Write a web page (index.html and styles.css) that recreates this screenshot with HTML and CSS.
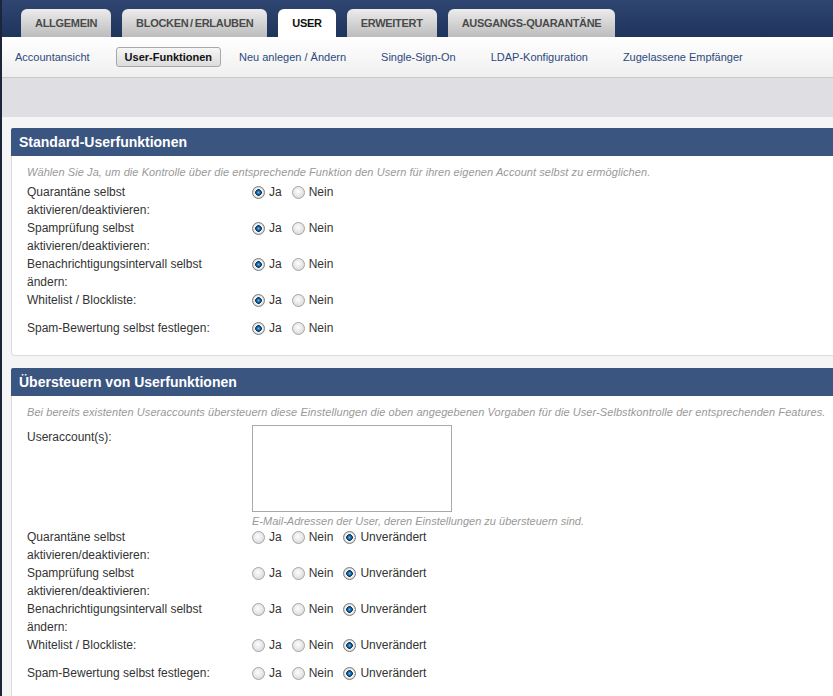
FILE: index.html
```html
<!DOCTYPE html>
<html>
<head>
    <title>User-Funktionen</title>
    <meta http-equiv="Content-Type" content="text/html; charset=utf-8">
    <meta name="viewport" content="width=device-width, initial-scale=1">

    <link rel="stylesheet" href="styles.css">
</head>
<body>
    <div class="topbar">
        <ul class="tabs">
            <li class="tab">Allgemein</li>
            <li class="tab">Blocken / Erlauben</li>
            <li class="tab tab-active">User</li>
            <li class="tab">Erweitert</li>
            <li class="tab">Ausgangs-Quarantäne</li>
        </ul>
    </div>

    <div class="subnav">
        <a class="subnav-link" href="#">Accountansicht</a>
        <a class="subnav-link subnav-active" href="#">User-Funktionen</a>
        <a class="subnav-link" href="#">Neu anlegen / Ändern</a>
        <a class="subnav-link" href="#">Single-Sign-On</a>
        <a class="subnav-link" href="#">LDAP-Konfiguration</a>
        <a class="subnav-link" href="#">Zugelassene Empfänger</a>
    </div>

    <div class="band"></div>

    <div class="content">
        <!-- Standard settings -->
        <section class="panel">
            <h2 class="panel-title">Standard-Userfunktionen</h2>
            <div class="panel-body">
                <p class="hint">Wählen Sie Ja, um die Kontrolle über die entsprechende Funktion den Usern für ihren eigenen Account selbst zu ermöglichen.</p>

                <div class="form-row">
                    <div class="form-label">Quarantäne selbst aktivieren/deaktivieren:</div>
                    <div class="form-field">
                        <label class="choice"><input type="radio" name="s1" checked>Ja</label>
                        <label class="choice"><input type="radio" name="s1">Nein</label>
                    </div>
                </div>
                <div class="form-row">
                    <div class="form-label">Spamprüfung selbst aktivieren/deaktivieren:</div>
                    <div class="form-field">
                        <label class="choice"><input type="radio" name="s2" checked>Ja</label>
                        <label class="choice"><input type="radio" name="s2">Nein</label>
                    </div>
                </div>
                <div class="form-row">
                    <div class="form-label">Benachrichtigungsintervall selbst ändern:</div>
                    <div class="form-field">
                        <label class="choice"><input type="radio" name="s3" checked>Ja</label>
                        <label class="choice"><input type="radio" name="s3">Nein</label>
                    </div>
                </div>
                <div class="form-row">
                    <div class="form-label">Whitelist / Blockliste:</div>
                    <div class="form-field">
                        <label class="choice"><input type="radio" name="s4" checked>Ja</label>
                        <label class="choice"><input type="radio" name="s4">Nein</label>
                    </div>
                </div>
                <div class="form-row">
                    <div class="form-label">Spam-Bewertung selbst festlegen:</div>
                    <div class="form-field">
                        <label class="choice"><input type="radio" name="s5" checked>Ja</label>
                        <label class="choice"><input type="radio" name="s5">Nein</label>
                    </div>
                </div>
            </div>
        </section>

        <!-- Overrides for existing accounts -->
        <section class="panel">
            <h2 class="panel-title">Übersteuern von Userfunktionen</h2>
            <div class="panel-body">
                <p class="hint">Bei bereits existenten Useraccounts übersteuern diese Einstellungen die oben angegebenen Vorgaben für die User-Selbstkontrolle der entsprechenden Features.</p>

                <div class="form-row form-row-area">
                    <div class="form-label">Useraccount(s):</div>
                    <div class="form-field">
                        <textarea class="accounts"></textarea>
                        <div class="field-hint">E-Mail-Adressen der User, deren Einstellungen zu übersteuern sind.</div>
                    </div>
                </div>
                <div class="form-row">
                    <div class="form-label">Quarantäne selbst aktivieren/deaktivieren:</div>
                    <div class="form-field">
                        <label class="choice"><input type="radio" name="o1">Ja</label>
                        <label class="choice"><input type="radio" name="o1">Nein</label>
                        <label class="choice"><input type="radio" name="o1" checked>Unverändert</label>
                    </div>
                </div>
                <div class="form-row">
                    <div class="form-label">Spamprüfung selbst aktivieren/deaktivieren:</div>
                    <div class="form-field">
                        <label class="choice"><input type="radio" name="o2">Ja</label>
                        <label class="choice"><input type="radio" name="o2">Nein</label>
                        <label class="choice"><input type="radio" name="o2" checked>Unverändert</label>
                    </div>
                </div>
                <div class="form-row">
                    <div class="form-label">Benachrichtigungsintervall selbst ändern:</div>
                    <div class="form-field">
                        <label class="choice"><input type="radio" name="o3">Ja</label>
                        <label class="choice"><input type="radio" name="o3">Nein</label>
                        <label class="choice"><input type="radio" name="o3" checked>Unverändert</label>
                    </div>
                </div>
                <div class="form-row">
                    <div class="form-label">Whitelist / Blockliste:</div>
                    <div class="form-field">
                        <label class="choice"><input type="radio" name="o4">Ja</label>
                        <label class="choice"><input type="radio" name="o4">Nein</label>
                        <label class="choice"><input type="radio" name="o4" checked>Unverändert</label>
                    </div>
                </div>
                <div class="form-row">
                    <div class="form-label">Spam-Bewertung selbst festlegen:</div>
                    <div class="form-field">
                        <label class="choice"><input type="radio" name="o5">Ja</label>
                        <label class="choice"><input type="radio" name="o5">Nein</label>
                        <label class="choice"><input type="radio" name="o5" checked>Unverändert</label>
                    </div>
                </div>
            </div>
        </section>
    </div>
</body>
</html>
```

FILE: styles.css
```css
body, html {
    margin: 0;
    font-family: "Liberation Sans", Arial, sans-serif;
    color: #333;
    background: #f5f5f6;
    overflow: hidden;
}

body {
    border-left: 2px solid #1d2538;
}

/* Top tab bar */
.topbar {
    height: 37px;
    background: linear-gradient(#2f4672, #1f345b);
}

.tabs {
    display: flex;
    gap: 11px;
    margin: 0;
    padding: 9px 0 0 19px;
    list-style: none;
}

.tab {
    height: 28px;
    line-height: 28px;
    padding: 0 14px;
    border-radius: 6px 6px 0 0;
    background: linear-gradient(#ececec, #bcbcbc);
    color: #4a4a4a;
    font-size: 11px;
    font-weight: bold;
    letter-spacing: -0.3px;
    word-spacing: -1px;
    text-transform: uppercase;
}

.tab-active {
    background: #fff;
    color: #111;
}

/* Sub navigation */
.subnav {
    height: 40px;
    display: flex;
    align-items: center;
    gap: 17px;
    padding-left: 4px;
    background: linear-gradient(#fff, #efefef);
    border-bottom: 1px solid #c9c9c9;
}

.subnav-link {
    padding: 3px 8px;
    font-size: 11px;
    color: #2d4a7c;
    text-decoration: none;
    border: 1px solid transparent;
}

.subnav-active {
    color: #111;
    font-weight: bold;
    border-color: #a8a8a8;
    border-radius: 3px;
    background: linear-gradient(#f6f6f6, #dcdcdc);
}

.subnav-active + .subnav-link {
    margin-left: -8px;
}

.band {
    height: 39px;
    background: #dfdfe3;
}

/* Panels */
.content {
    padding: 11px 0 10px 9px;
}

.panel {
    margin: 0 -20px 12px 0;
    background: #fff;
    border: 1px solid #dcdcdc;
    border-top: none;
    border-radius: 4px;
}

.panel-title {
    margin: 0 -1px;
    height: 28px;
    line-height: 28px;
    padding-left: 8px;
    background: #3b5581;
    color: #fff;
    font-size: 14px;
    font-weight: bold;
    border-radius: 2px 2px 0 0;
}

.panel-body {
    padding: 9px 15px 8px;
}

.hint {
    margin: 0 0 4px;
    font-size: 11px;
    line-height: 14px;
    font-style: italic;
    letter-spacing: 0.07px;
    color: #999;
}

.form-row {
    display: flex;
    min-height: 28px;
    font-size: 12px;
    line-height: 18px;
}

.form-label {
    width: 215px;
    padding-right: 10px;
}

.form-row-area {
    padding-top: 2px;
}

.form-row-area .form-label {
    padding-top: 3px;
}

.form-field {
    display: flex;
    align-items: flex-start;
}

.form-row-area .form-field {
    flex-direction: column;
}

.accounts {
    display: block;
    width: 200px;
    height: 87px;
    box-sizing: border-box;
    margin: 0;
    border: 1px solid #aaa;
    resize: none;
}

.field-hint {
    margin-top: 2px;
    font-size: 11px;
    line-height: 14px;
    font-style: italic;
    color: #999;
}

/* Radio buttons */
.choice {
    display: inline-flex;
    align-items: center;
    margin-right: 10px;
    height: 18px;
}

.choice input {
    -webkit-appearance: none;
    appearance: none;
    width: 13px;
    height: 13px;
    margin: 0 4px 0 0;
    border: 1px solid #a4a4a4;
    border-radius: 50%;
    box-sizing: border-box;
    background: radial-gradient(circle at 45% 40%, #fdfdfd, #d2d2d2);
}

.choice input:checked {
    border-color: #7c7c7c;
    background: radial-gradient(circle, #6cc0f0 0, #1a72b8 1.5px, #0b2d52 3px, #fafafa 3.6px, #e6e6e6 4.6px, #cfcfcf 6px);
}
```
